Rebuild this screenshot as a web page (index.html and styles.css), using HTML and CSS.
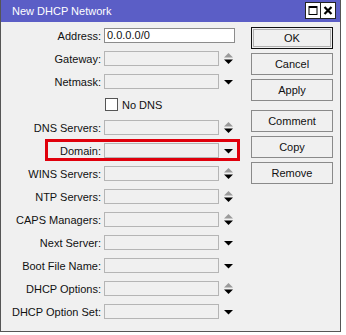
FILE: index.html
```html
<!DOCTYPE html>
<html>
<head>
    <meta charset="UTF-8">
    <title>New DHCP Network</title>
    <link rel="stylesheet" href="styles.css">
</head>
<body>
<div class="window">
    <div class="titlebar">
        <span class="title">New DHCP Network</span>
        <div class="title-buttons">
            <span class="tbtn"><svg width="14" height="15" viewBox="0 0 14 15"><rect x="3" y="3.5" width="8" height="8" fill="none" stroke="#000" stroke-width="1"/><rect x="3" y="3" width="8" height="2" fill="#000"/></svg></span>
            <span class="tbtn"><svg width="14" height="15" viewBox="0 0 14 15"><path d="M3.5 4 L10.5 11 M10.5 4 L3.5 11" stroke="#000" stroke-width="2.2"/></svg></span>
        </div>
    </div>
    <div class="content">
        <div class="fields">
            <div class="row">
                <label class="lbl">Address:</label>
                <div class="field field-wide">0.0.0.0/0</div>
            </div>
            <div class="row">
                <label class="lbl">Gateway:</label>
                <div class="field"></div>
                <svg class="arrow" width="9" height="12" viewBox="0 0 9 12"><path d="M0 4.5 L4.5 0 L9 4.5 Z" fill="#9a9a9a"/><path d="M0 6.5 L9 6.5 L4.5 11 Z" fill="#000"/></svg>
            </div>
            <div class="row">
                <label class="lbl">Netmask:</label>
                <div class="field"></div>
                <svg class="arrow" width="9" height="12" viewBox="0 0 9 12"><path d="M0 4 L9 4 L4.5 8.5 Z" fill="#000"/></svg>
            </div>
            <div class="row">
                <span class="lbl"></span>
                <span class="checkbox"></span>
                <span class="check-text">No DNS</span>
            </div>
            <div class="row">
                <label class="lbl">DNS Servers:</label>
                <div class="field"></div>
                <svg class="arrow" width="9" height="12" viewBox="0 0 9 12"><path d="M0 4.5 L4.5 0 L9 4.5 Z" fill="#9a9a9a"/><path d="M0 6.5 L9 6.5 L4.5 11 Z" fill="#000"/></svg>
            </div>
            <div class="row">
                <label class="lbl">Domain:</label>
                <div class="field"></div>
                <svg class="arrow" width="9" height="12" viewBox="0 0 9 12"><path d="M0 4 L9 4 L4.5 8.5 Z" fill="#000"/></svg>
            </div>
            <div class="row">
                <label class="lbl">WINS Servers:</label>
                <div class="field"></div>
                <svg class="arrow" width="9" height="12" viewBox="0 0 9 12"><path d="M0 4.5 L4.5 0 L9 4.5 Z" fill="#9a9a9a"/><path d="M0 6.5 L9 6.5 L4.5 11 Z" fill="#000"/></svg>
            </div>
            <div class="row">
                <label class="lbl">NTP Servers:</label>
                <div class="field"></div>
                <svg class="arrow" width="9" height="12" viewBox="0 0 9 12"><path d="M0 4.5 L4.5 0 L9 4.5 Z" fill="#9a9a9a"/><path d="M0 6.5 L9 6.5 L4.5 11 Z" fill="#000"/></svg>
            </div>
            <div class="row">
                <label class="lbl">CAPS Managers:</label>
                <div class="field"></div>
                <svg class="arrow" width="9" height="12" viewBox="0 0 9 12"><path d="M0 4.5 L4.5 0 L9 4.5 Z" fill="#9a9a9a"/><path d="M0 6.5 L9 6.5 L4.5 11 Z" fill="#000"/></svg>
            </div>
            <div class="row">
                <label class="lbl">Next Server:</label>
                <div class="field"></div>
                <svg class="arrow" width="9" height="12" viewBox="0 0 9 12"><path d="M0 4 L9 4 L4.5 8.5 Z" fill="#000"/></svg>
            </div>
            <div class="row">
                <label class="lbl">Boot File Name:</label>
                <div class="field"></div>
                <svg class="arrow" width="9" height="12" viewBox="0 0 9 12"><path d="M0 4 L9 4 L4.5 8.5 Z" fill="#000"/></svg>
            </div>
            <div class="row">
                <label class="lbl">DHCP Options:</label>
                <div class="field"></div>
                <svg class="arrow" width="9" height="12" viewBox="0 0 9 12"><path d="M0 4.5 L4.5 0 L9 4.5 Z" fill="#9a9a9a"/><path d="M0 6.5 L9 6.5 L4.5 11 Z" fill="#000"/></svg>
            </div>
            <div class="row">
                <label class="lbl">DHCP Option Set:</label>
                <div class="field"></div>
                <svg class="arrow" width="9" height="12" viewBox="0 0 9 12"><path d="M0 4 L9 4 L4.5 8.5 Z" fill="#000"/></svg>
            </div>
        </div>
        <div class="buttons">
            <button class="btn btn-default">OK</button>
            <button class="btn">Cancel</button>
            <button class="btn btn-group-end">Apply</button>
            <button class="btn">Comment</button>
            <button class="btn">Copy</button>
            <button class="btn">Remove</button>
        </div>
    </div>
    <div class="highlight"></div>
</div>
</body>
</html>
```

FILE: styles.css
```css
body {
    margin: 0;
    background-color: #fff;
    font-family: "Liberation Sans", Arial, sans-serif;
    font-size: 11px;
    color: #111;
}
.window {
    position: relative;
    width: 339px;
    height: 331px;
    border: 1px solid #555;
    border-top: none;
    background-color: #f0f0f0;
}
.titlebar {
    height: 22px;
    background-color: #5b5ec6;
    display: flex;
    align-items: center;
    justify-content: space-between;
    padding: 0 5px 0 11px;
}
.title {
    color: #fff;
    font-size: 11px;
}
.title-buttons {
    display: flex;
    gap: 1px;
    margin-top: -2px;
}
.tbtn {
    display: block;
    width: 14px;
    height: 15px;
    background-color: #fff;
    outline: 1px solid #222;
}
.tbtn svg {
    display: block;
}
.content {
    display: flex;
    padding-top: 5px;
}
.fields {
    width: 250px;
    padding-top: 1px;
}
.row {
    display: flex;
    align-items: center;
    height: 15px;
    margin-bottom: 8px;
}
.lbl {
    width: 100px;
    margin-right: 3px;
    text-align: right;
    flex-shrink: 0;
}
.field {
    width: 111px;
    height: 13px;
    border: 1px solid #b5b5b5;
    background-color: #f0f0f0;
    line-height: 13px;
    padding-left: 2px;
    box-sizing: content-box;
}
.field-wide {
    width: 127px;
    background-color: #fff;
    border-color: #8c8c8c;
}
.arrow {
    display: block;
    margin-left: 5px;
}
.checkbox {
    width: 11px;
    height: 11px;
    border: 1px solid #555;
    background-color: #fff;
    margin-left: 1px;
}
.check-text {
    margin-left: 4px;
}
.buttons {
    display: flex;
    flex-direction: column;
    width: 82px;
}
.btn {
    height: 22px;
    margin-bottom: 4px;
    padding: 0;
    border: 1px solid #8a8a8a;
    background-color: #f0f0f0;
    font-family: "Liberation Sans", Arial, sans-serif;
    font-size: 11px;
    color: #111;
}
.btn-default {
    border: 1px solid #111;
    box-shadow: inset 0 0 0 1px #f0f0f0, inset 0 0 0 2px #b0b0b0;
}
.btn-group-end {
    margin-bottom: 9px;
}
.highlight {
    position: absolute;
    left: 44px;
    top: 139px;
    width: 189px;
    height: 16px;
    border: 3px solid #e0000c;
}
```
